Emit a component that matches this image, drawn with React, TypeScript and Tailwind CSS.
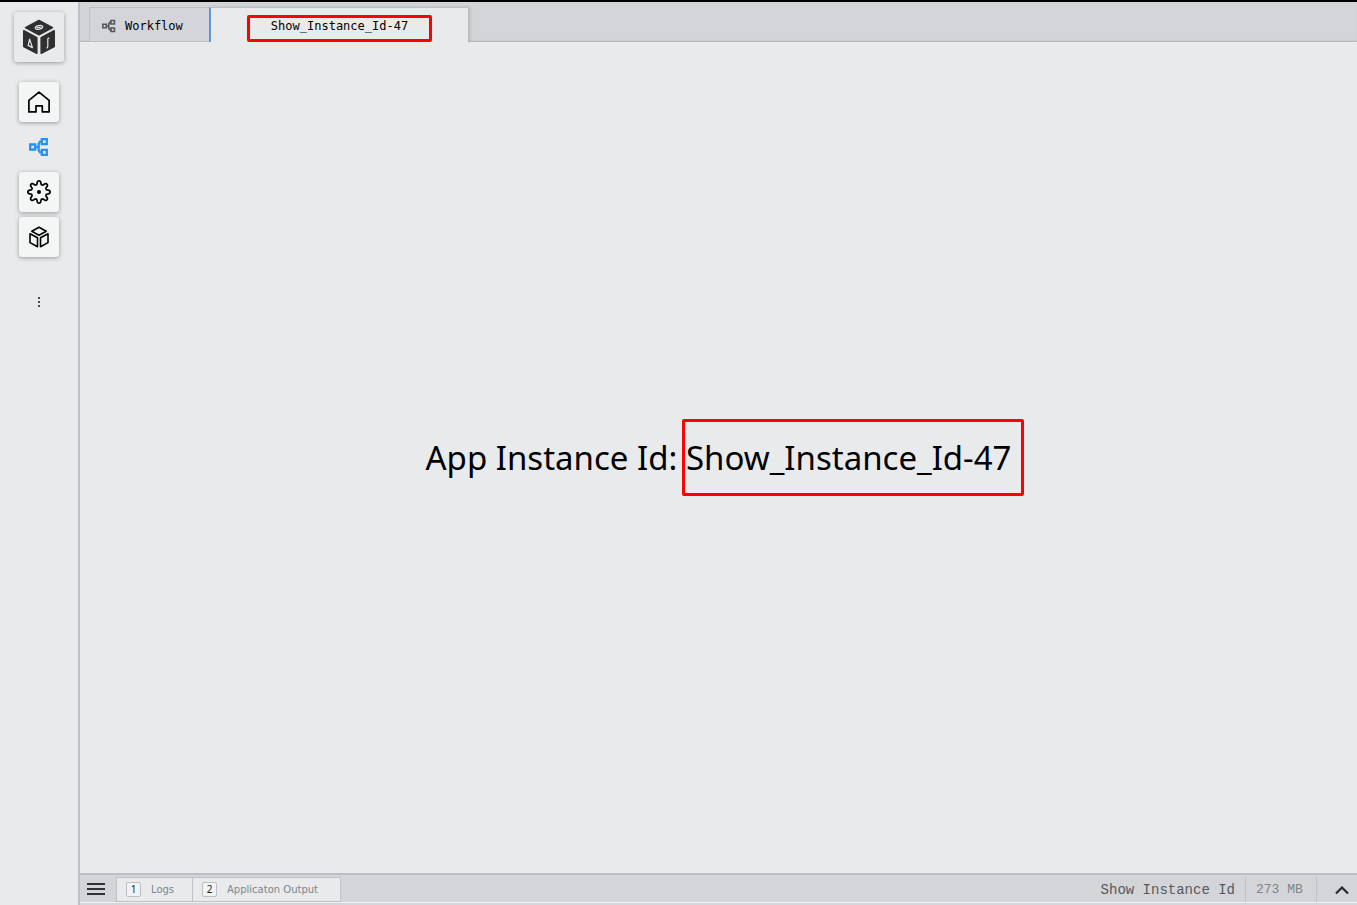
import React from "react";

type IconProps = { className?: string };

function CubeLogo({ className }: IconProps) {
  return (
    <svg viewBox="0 0 34 38" className={className} aria-hidden="true">
      <g fill="#303030" stroke="#303030" strokeWidth="1.6" strokeLinejoin="round">
        <path d="M17 2.5 30.5 9.6 17 16.8 3.5 9.6Z" />
        <path d="M1.8 12.8 14.8 19.7V35.3L1.8 28.5Z" />
        <path d="M32.2 12.8 19.2 19.7V35.3l13-6.8Z" />
      </g>
      <g fill="none" stroke="#e3e4e5" strokeWidth="1.2" strokeLinejoin="round" strokeLinecap="round">
        <path d="m7.6 21.2 2.8 8.4-4.2-2.2Z" />
        <path d="M26.8 20.2c-.9-.1-1 .6-1 1.6v6.4c0 1-.1 1.6-.8 1.7" />
        <ellipse cx="17" cy="9.4" rx="3.8" ry="1.8" transform="rotate(-12 17 9.4)" />
        <path d="m15 9.8 4-.8" />
      </g>
    </svg>
  );
}

function HomeIcon({ className }: IconProps) {
  return (
    <svg viewBox="0 0 24 24" className={className} fill="none" stroke="currentColor" strokeWidth="1.7" strokeLinejoin="round" aria-hidden="true">
      <path d="M1.9 10.3 12 2.1l10.1 8.2v11.6h-6.8v-6.1H9v6.1H1.9Z" />
    </svg>
  );
}

function WorkflowIcon({ className }: IconProps) {
  return (
    <svg viewBox="0 0 20 20" className={className} fill="none" stroke="currentColor" strokeWidth="2.3" aria-hidden="true">
      <path d="M1.2 7.5h5v5h-5ZM12.8 2.2h5v5h-5ZM12.8 12.8h5v5h-5Z" />
      <path d="M6 10h4M13 4.7h-2L9.700 6.700v6.600l1.300 2h2" />
    </svg>
  );
}

const GEAR_STEPS = 96;
const gearOutline = Array.from({ length: GEAR_STEPS }, (_, i) => {
  const angle = (i / GEAR_STEPS) * Math.PI * 2;
  const radius = 9.4 + 1.8 * Math.tanh(1.8 * Math.cos(8 * angle));
  return `${(12 + radius * Math.cos(angle)).toFixed(2)},${(12 + radius * Math.sin(angle)).toFixed(2)}`;
}).join(" ");

function GearIcon({ className }: IconProps) {
  return (
    <svg viewBox="0 0 24 24" className={className} fill="none" stroke="currentColor" strokeWidth="1.7" strokeLinejoin="round" aria-hidden="true">
      <polygon points={gearOutline} />
      <circle cx="12" cy="12" r="2" fill="currentColor" stroke="none" />
    </svg>
  );
}

function BoxIcon({ className }: IconProps) {
  return (
    <svg viewBox="0 0 24 24" className={className} fill="none" stroke="currentColor" strokeWidth="1.6" strokeLinejoin="round" aria-hidden="true">
      <path d="m12 2.2 7.2 4L12 10.2l-7.2-4Z" />
      <path d="m3 8.7 7.5 4.1v9L3 17.6Z" />
      <path d="m21 8.7-7.5 4.1v9l7.5-4.2Z" />
    </svg>
  );
}

const navItems = [
  { label: "Home", Icon: HomeIcon, active: false },
  { label: "Workflow", Icon: WorkflowIcon, active: true },
  { label: "Settings", Icon: GearIcon, active: false },
  { label: "Apps", Icon: BoxIcon, active: false },
];

function Sidebar() {
  return (
    <aside className="flex w-20 shrink-0 flex-col items-center border-r-2 border-[#bdbec7] pt-[10px]">
      <button aria-label="Main menu" className="flex size-[50px] items-center justify-center rounded-[3px] bg-[#e9eaec] shadow-[0_1px_4px_rgba(0,0,0,0.35)]">
        <CubeLogo className="h-[38px] w-[34px]" />
      </button>
      <nav className="mt-5 flex flex-col gap-[5px]">
        {navItems.map(({ label, Icon, active }) => (
          <button
            key={label}
            aria-label={label}
            className={
              active
                ? "flex size-10 items-center justify-center text-[#2493f3]"
                : "flex size-10 items-center justify-center rounded-[3px] bg-[#f4f6f5] text-black shadow-[0_1px_4px_rgba(0,0,0,0.35)]"
            }
          >
            <Icon className={active ? "size-5" : "size-6"} />
          </button>
        ))}
      </nav>
      <button aria-label="More" className="mt-[35px] flex size-5 items-center justify-center text-[#554840]">
        <svg viewBox="0 0 4 12" className="h-3 w-1" fill="currentColor" aria-hidden="true">
          <path d="M1 1h2v2H1ZM1 5h2v2H1ZM1 9h2v2H1Z" />
        </svg>
      </button>
    </aside>
  );
}

function TabBar() {
  return (
    <div role="tablist" className="flex h-10 shrink-0 overflow-hidden bg-[#d4d5d9] pt-[5px] pl-[9px] font-['DejaVu_Sans_Mono',monospace] text-xs text-black shadow-[inset_0_-2px_2px_-1px_rgba(0,0,0,0.15)]">
      <button role="tab" aria-selected="false" className="flex w-[120px] items-center gap-[9px] border border-r-0 border-[#bfc0c6] bg-[#d4d5d9] pt-[2px] pl-3">
        <WorkflowIcon className="size-[14px] text-[#55585c]" />
        Workflow
      </button>
      <button role="tab" aria-selected="true" className="flex w-[259px] items-end justify-center border-t border-l-2 border-t-[#bfc0c6] border-l-[#5b9bd5] bg-[#e9eaec] shadow-[2px_0_3px_rgba(0,0,0,0.15)]">
        <span className="flex h-[27px] w-[185px] items-center justify-center rounded-xs border-3 border-[#ff0000] pb-[5px]">
          Show_Instance_Id-47
        </span>
      </button>
    </div>
  );
}

const panels = [
  { key: "1", label: "Logs", size: "w-[75px]" },
  { key: "2", label: "Applicaton Output", size: "w-[148px]" },
];

function StatusBar() {
  return (
    <footer className="shrink-0 border-t-2 border-[#bdbec7] bg-[#d4d5d9] pb-[2px]">
      <div className="flex h-[28px] items-stretch border-b border-[#eff0f2]">
        <button aria-label="Open menu" className="flex w-9 items-center pl-[7px] text-[#303236]">
          <svg viewBox="0 0 18 14" className="h-[14px] w-[18px]" stroke="currentColor" strokeWidth="2" aria-hidden="true">
            <path d="M0 2h18M0 7h18M0 12h18" />
          </svg>
        </button>
        <div className="mt-[2px] flex border border-[#bfc0c8] bg-[#e9eaec]">
          {panels.map(({ key, label, size }, i) => (
            <button
              key={key}
              className={`flex items-center gap-[10px] pl-[9px] font-['DejaVu_Sans',sans-serif] text-[10px] text-[#7d878e] ${size} ${i > 0 ? "border-l border-[#bfc0c8]" : ""}`}
            >
              <span className="flex size-[15px] items-center justify-center rounded-xs border border-[#bbc0c4] bg-[#f2f3f4] font-['Noto_Sans',sans-serif] text-[#222]">{key}</span>
              {label}
            </button>
          ))}
        </div>
        <div className="ml-auto flex items-stretch pt-[2px] font-['Liberation_Mono',monospace] text-[#55595e]">
          <span className="flex items-center pr-[10px] text-sm">Show Instance Id</span>
          <span className="flex w-[72px] items-center border-x border-[#bfc0c8] pl-[10px] text-[13px] text-[#7d858b]">273 MB</span>
          <button aria-label="Expand panel" className="flex w-10 items-center justify-end pr-2 text-[#26292d]">
            <svg viewBox="0 0 14 10" className="h-[10px] w-[14px]" fill="none" stroke="currentColor" strokeWidth="2.2" aria-hidden="true">
              <path d="m1 8.5 6-6 6 6" />
            </svg>
          </button>
        </div>
      </div>
    </footer>
  );
}

export default function App() {
  return (
    <div className="flex h-screen border-t-2 border-black bg-[#e9eaec]">
      <Sidebar />
      <div className="flex min-w-0 flex-1 flex-col">
        <TabBar />
        <main className="flex flex-1 items-center justify-center">
          <h1 className="font-['Noto_Sans',sans-serif] text-[33px] whitespace-nowrap text-black">
            App Instance Id:{" "}
            <span className="relative">
              Show_Instance_Id-47
              <span className="absolute -inset-y-4 -right-3 -left-1 rounded-xs border-3 border-[#ff0000]" />
            </span>
          </h1>
        </main>
        <StatusBar />
      </div>
    </div>
  );
}
